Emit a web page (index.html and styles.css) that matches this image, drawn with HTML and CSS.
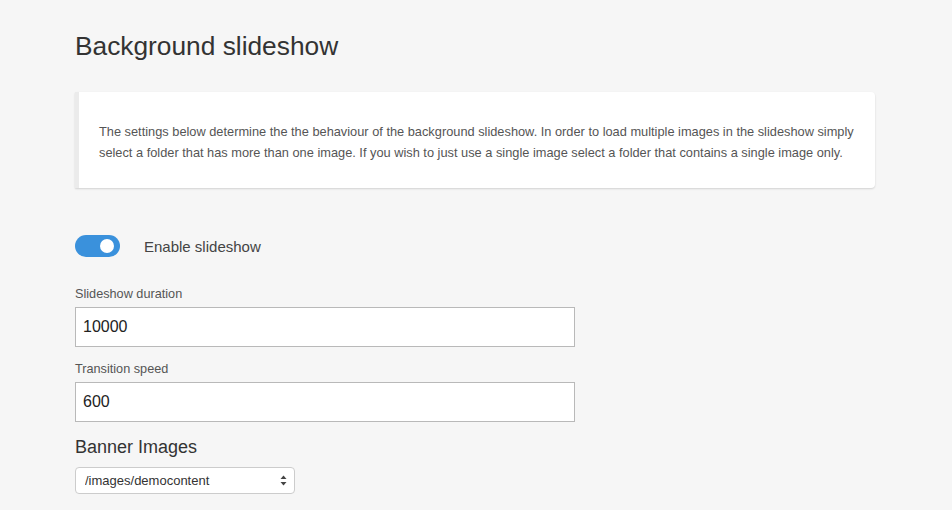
FILE: index.html
```html
<!DOCTYPE html>
<html lang="en">
<head>
  <meta charset="UTF-8">
  <meta name="viewport" content="width=device-width, initial-scale=1.0">
  <title>Background slideshow</title>
  <link rel="stylesheet" href="styles.css">
</head>
<body>
  <div class="page">
    <h1>Background slideshow</h1>

    <div class="notice">
      <p>The settings below determine the the behaviour of the background slideshow. In order to load multiple images in the slideshow simply select a folder that has more than one image. If you wish to just use a single image select a folder that contains a single image only.</p>
    </div>

    <form class="settings">
      <label class="switch-row">
        <input type="checkbox" class="switch-input" checked>
        <span class="switch"></span>
        <span class="switch-label">Enable slideshow</span>
      </label>

      <label for="duration" class="field-label">Slideshow duration</label>
      <input type="text" id="duration" class="text-field" value="10000">

      <label for="speed" class="field-label">Transition speed</label>
      <input type="text" id="speed" class="text-field" value="600">

      <h3>Banner Images</h3>
      <div class="select-wrap">
        <select class="folder-select">
          <option>/images/democontent</option>
        </select>
        <svg class="arrows" width="7" height="11" viewBox="0 0 7 11">
          <path d="M3.5 0.5 L6.5 4 L0.5 4 Z" fill="#444"/>
          <path d="M3.5 10.5 L6.5 7 L0.5 7 Z" fill="#444"/>
        </svg>
      </div>
    </form>
  </div>
</body>
</html>
```

FILE: styles.css
```css
* {
  margin: 0;
  padding: 0;
  box-sizing: border-box;
}
body {
  font-family: 'Liberation Sans', Arial, sans-serif;
  background-color: #f6f6f6;
  color: #333;
}
.page {
  padding: 30px 77px 0 75px;
}
h1 {
  font-size: 26.3px;
  font-weight: normal;
  color: #333;
  line-height: 32px;
  margin-bottom: 30px;
}
.notice {
  background-color: #fff;
  border-left: 4px solid #ebebeb;
  border-radius: 0 4px 4px 0;
  box-shadow: 0 1px 2px rgba(0, 0, 0, 0.15);
  padding: 29px 20px 29px 20px;
  height: 96px;
}
.notice p {
  font-size: 12.8px;
  line-height: 21px;
  color: #555;
}
.settings {
  padding-top: 47px;
}
.switch-row {
  display: flex;
  align-items: center;
  gap: 24px;
  margin-bottom: 29px;
  cursor: pointer;
}
.switch-input {
  display: none;
}
.switch {
  width: 45px;
  height: 22px;
  border-radius: 11px;
  background-color: #3a91dc;
  position: relative;
}
.switch::after {
  content: "";
  position: absolute;
  top: 4px;
  right: 6px;
  width: 14px;
  height: 14px;
  border-radius: 50%;
  background-color: #fff;
}
.switch-label {
  font-size: 15px;
  color: #444;
}
.field-label {
  display: block;
  font-size: 12.7px;
  color: #555;
  line-height: 16px;
  margin-bottom: 5px;
}
.text-field {
  display: block;
  width: 500px;
  height: 40px;
  border: 1px solid #b9b9b9;
  background-color: #fff;
  padding: 0 7px;
  font-family: inherit;
  font-size: 16px;
  color: #222;
  margin-bottom: 14px;
}
h3 {
  font-size: 18px;
  font-weight: normal;
  color: #333;
  line-height: 22px;
  margin-bottom: 9px;
}
.select-wrap {
  position: relative;
  width: 220px;
}
.folder-select {
  appearance: none;
  -webkit-appearance: none;
  width: 220px;
  height: 27px;
  border: 1px solid #ccc;
  border-radius: 4px;
  background-color: #fff;
  padding: 0 9px;
  font-family: inherit;
  font-size: 13px;
  color: #333;
}
.arrows {
  position: absolute;
  right: 8px;
  top: 8px;
  pointer-events: none;
}
```
